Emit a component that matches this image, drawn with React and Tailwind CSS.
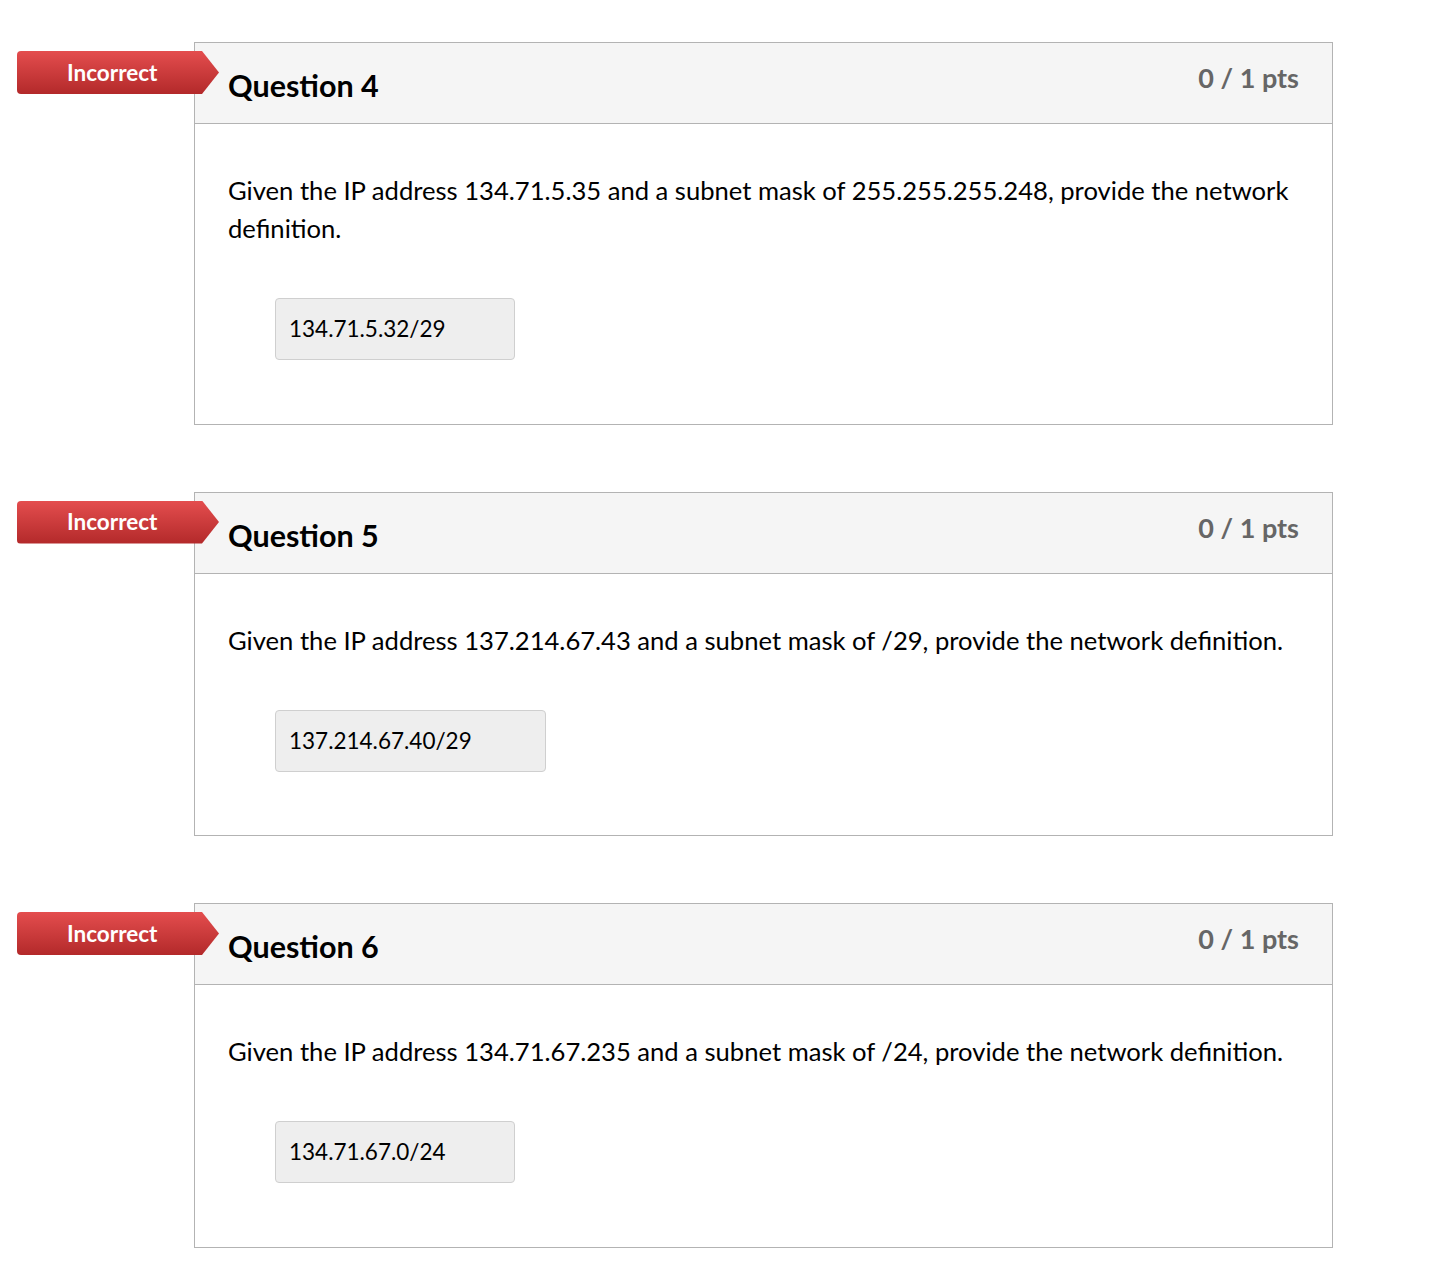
import React from "react";

const questions = [
  {
    n: 4,
    text: "Given the IP address 134.71.5.35 and a subnet mask of 255.255.255.248, provide the network definition.",
    answer: "134.71.5.32/29",
    w: "w-[240px]",
  },
  {
    n: 5,
    text: "Given the IP address 137.214.67.43 and a subnet mask of /29, provide the network definition.",
    answer: "137.214.67.40/29",
    w: "w-[271px]",
  },
  {
    n: 6,
    text: "Given the IP address 134.71.67.235 and a subnet mask of /24, provide the network definition.",
    answer: "134.71.67.0/24",
    w: "w-[240px]",
  },
];

function Badge() {
  return (
    <div className="absolute left-[-178px] top-[8px] z-10 h-[43px] w-[202px] rounded-l-[4px] bg-linear-to-b from-[#e44d4e] to-[#b3292a] [clip-path:polygon(0_0,calc(100%_-_17px)_0,100%_50%,calc(100%_-_17px)_100%,0_100%)]">
      <div className="flex h-full items-center pl-[50px] pt-[1px] text-[22.5px] font-bold leading-none text-white">
        Incorrect
      </div>
    </div>
  );
}

export default function App() {
  return (
    <div className="min-h-screen bg-white pt-[42px] font-['Lato','Liberation_Sans',sans-serif] text-[#000]">
      {questions.map((q) => (
        <div
          key={q.n}
          className="relative mb-[67px] ml-[194px] w-[1139px] border border-[#b3b3b3]"
        >
          <Badge />
          <div className="flex h-[81px] items-start justify-between border-b border-[#b3b3b3] bg-[#f5f5f5] px-[33px]">
            <div className="pt-[24px] text-[30.5px] font-bold leading-[1.2]">
              Question {q.n}
            </div>
            <div className="pt-[19px] text-[27px] font-bold leading-[1.2] text-[#666]">
              0 / 1 pts
            </div>
          </div>
          <div className="px-[33px] pt-[47px] pb-[63.5px]">
            <p className="text-[25.6px] leading-[38px]">{q.text}</p>
            <div
              className={`mt-[51px] ml-[47px] flex h-[62px] items-center rounded-[4px] border border-[#cfcfcf] bg-[#eeeeee] pl-[13px] text-[22.5px] ${q.w}`}
            >
              {q.answer}
            </div>
          </div>
        </div>
      ))}
    </div>
  );
}
